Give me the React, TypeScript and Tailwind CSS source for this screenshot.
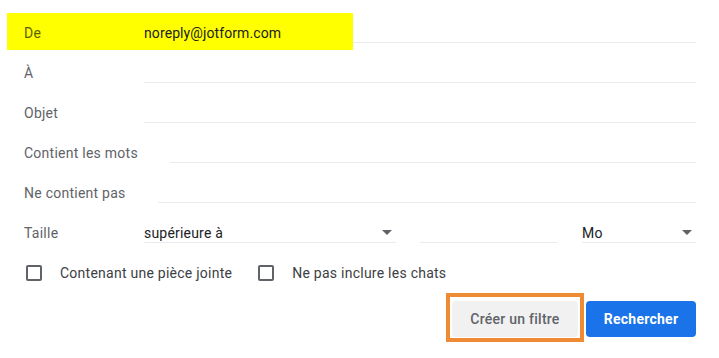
import React from "react";

function Field({ label, value, highlight }: { label: string; value?: string; highlight?: boolean }) {
  return (
    <div className="relative flex h-10 items-center pl-6">
      {highlight && (
        <div className="absolute left-[7px] top-0 z-10 h-[37px] w-[346px] bg-[#ffff00]" />
      )}
      <span
        className={
          "relative z-20 min-w-[120px] pr-8 text-[14px] leading-5 tracking-[0.25px] " +
          (highlight ? "text-[#5c5f00]" : "text-[#5f6368]")
        }
      >
        {label}
      </span>
      <div className="h-[20px] flex-1 border-b border-[#e8eaed] text-[14px] leading-5 tracking-[0.1px] text-[#202124]">
        {value && <span className="relative z-20">{value}</span>}
      </div>
    </div>
  );
}

function Select({ value, className }: { value: string; className: string }) {
  return (
    <div
      className={
        "flex h-[20px] items-center justify-between border-b border-[#e8eaed] text-[14px] leading-5 tracking-[0.2px] text-[#202124] " +
        className
      }
    >
      <span>{value}</span>
      <span className="mr-1 h-0 w-0 border-x-[5px] border-t-[5px] border-x-transparent border-t-[#5f6368]" />
    </div>
  );
}

function Checkbox({ label, className = "" }: { label: string; className?: string }) {
  return (
    <label className={"flex items-center " + className}>
      <span className="h-4 w-4 rounded-[2px] border-2 border-[#5f6368]" />
      <span className="ml-[18px] text-[14px] leading-5 tracking-[0.25px] text-[#3c4043]">{label}</span>
    </label>
  );
}

export default function App() {
  return (
    <div
      className="h-[358px] w-[719px] bg-white pr-[23px] pt-[13px]"
      style={{ fontFamily: "Roboto, 'Liberation Sans', sans-serif" }}
    >
      <Field label="De" value="noreply@jotform.com" highlight />
      <Field label="À" />
      <Field label="Objet" />
      <Field label="Contient les mots" />
      <Field label="Ne contient pas" />

      {/* Taille */}
      <div className="flex h-10 items-center pl-6">
        <span className="min-w-[120px] pr-8 text-[14px] leading-5 tracking-[0.25px] text-[#5f6368]">Taille</span>
        <Select value="supérieure à" className="w-[252px]" />
        <div className="ml-6 h-[20px] w-[137px] border-b border-[#e8eaed]" />
        <Select value="Mo" className="ml-[25px] w-[114px]" />
      </div>

      <div className="flex h-10 items-center pl-[26px]">
        <Checkbox label="Contenant une pièce jointe" />
        <Checkbox label="Ne pas inclure les chats" className="ml-[26px]" />
      </div>

      <div className="flex items-start justify-end">
        <div className="border-4 border-[#ef8a35] pb-[1px] pl-[2px] pr-[2px] pt-1">
          <button className="h-9 w-[126px] rounded bg-[#f1f1f1] text-[14px] font-medium tracking-[0.25px] text-[#5f6368]">
            Créer un filtre
          </button>
        </div>
        <button className="ml-[2px] mt-2 h-9 w-[110px] rounded bg-[#1a73e8] text-[14px] font-bold tracking-[0.25px] text-white">
          Rechercher
        </button>
      </div>
    </div>
  );
}
